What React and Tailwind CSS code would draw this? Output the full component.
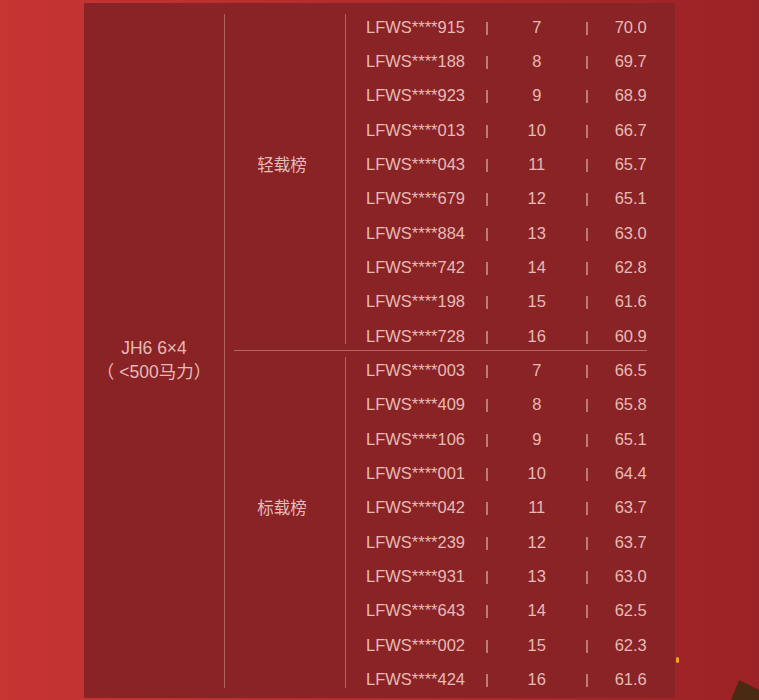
import React from 'react';

const LIGHT = [
  ['LFWS****915', 7, '70.0'],
  ['LFWS****188', 8, '69.7'],
  ['LFWS****923', 9, '68.9'],
  ['LFWS****013', 10, '66.7'],
  ['LFWS****043', 11, '65.7'],
  ['LFWS****679', 12, '65.1'],
  ['LFWS****884', 13, '63.0'],
  ['LFWS****742', 14, '62.8'],
  ['LFWS****198', 15, '61.6'],
  ['LFWS****728', 16, '60.9'],
];

const STANDARD = [
  ['LFWS****003', 7, '66.5'],
  ['LFWS****409', 8, '65.8'],
  ['LFWS****106', 9, '65.1'],
  ['LFWS****001', 10, '64.4'],
  ['LFWS****042', 11, '63.7'],
  ['LFWS****239', 12, '63.7'],
  ['LFWS****931', 13, '63.0'],
  ['LFWS****643', 14, '62.5'],
  ['LFWS****002', 15, '62.3'],
  ['LFWS****424', 16, '61.6'],
];

function Row({ vin, rank, score }) {
  return (
    <div className="h-[34.33px] flex items-center text-[16.5px] text-[#e6bab6]">
      <div className="w-[140px] pl-[20px]">{vin}</div>
      <div className="w-[1.5px] h-[13px] mt-[2px] bg-[#c07a76]" />
      <div className="w-[98.5px] text-center">{rank}</div>
      <div className="w-[1.5px] h-[13px] mt-[2px] bg-[#c07a76]" />
      <div className="w-[86.5px] text-center">{score}</div>
    </div>
  );
}

function Group({ label, rows }) {
  return (
    <div className="flex">
      <div className="w-[121px] flex pt-[4px] pb-[9px]">
        <div className="flex-1 border-r border-[#b0605e] flex items-center justify-center pb-[28px] pr-[6px] text-[16.5px] text-[#e6bab6]">
          {label}
        </div>
      </div>
      <div className="flex flex-col">
        {rows.map(r => (
          <Row key={r[0] + r[1]} vin={r[0]} rank={r[1]} score={r[2]} />
        ))}
      </div>
    </div>
  );
}

export default function App() {
  return (
    <div
      className="relative w-[759px] h-[700px] overflow-hidden bg-gradient-to-r from-[#c73533] to-[#9b2226] pt-[3px] pl-[84px]"
      style={{ fontFamily: '"Liberation Sans", Arial, "Noto Sans CJK SC", sans-serif' }}
    >
      <div className="w-[591px] h-[695px] bg-[#8a2325] flex">
        {/* model column */}
        <div className="w-[141px] flex pt-[11px] pb-[10px]">
          <div className="flex-1 border-r border-[#b0605e] flex flex-col items-center justify-center pt-[18px] text-[17.5px] leading-[24px] text-[#e6bab6]">
            <div>JH6 6×4</div>
            <div>（ &lt;500马力）</div>
          </div>
        </div>

        {/* ranking groups */}
        <div className="flex flex-col pt-[7px]">
          <Group label="轻载榜" rows={LIGHT} />
          <div className="-mt-[3px] mb-[2px] ml-[9px] w-[413px] h-px bg-[#b46663]" />
          <Group label="标载榜" rows={STANDARD} />
        </div>
      </div>

      {/* background ornaments */}
      <div className="absolute left-[676px] top-[657px] w-[3px] h-[6px] rounded-full bg-[#e8a623]" />
      <svg className="absolute right-0 bottom-0" width="30" height="24" viewBox="0 0 30 24">
        <polygon points="10,4 30,14 30,24 2,24" fill="#4a2a12" />
      </svg>
    </div>
  );
}
